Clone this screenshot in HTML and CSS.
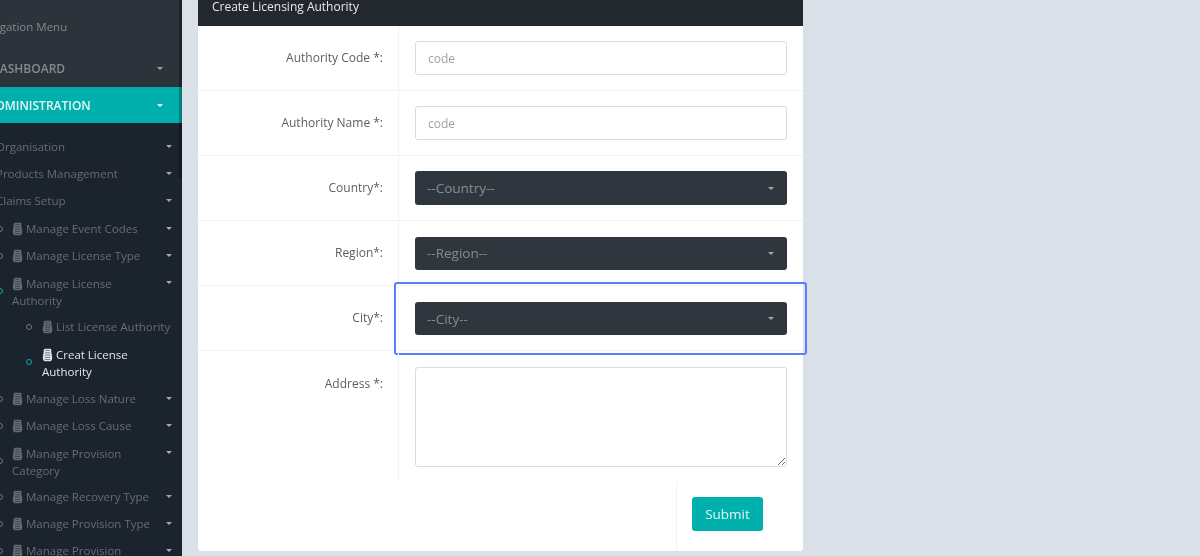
FILE: index.html
```html
<!DOCTYPE html>
<html lang="en">
<head>
    <meta charset="UTF-8">
    <meta name="viewport" content="width=device-width, initial-scale=1.0">
    <title>Create Licensing Authority</title>
    <link rel="stylesheet" href="styles.css">
</head>
<body>
    <svg class="defs" width="0" height="0">
        <symbol id="stack" viewBox="0 0 12 14">
            <path d="M3 0.3h6.5l1 1.6-.6 1.2.6 1.2-.4 1 1 1.4-.6 1.3.8 1.2-.6 3.2-1.2 1.3h-7l-1.2-1.3-.6-3.2.8-1.2-.6-1.3 1-1.4-.4-1 .6-1.2-.6-1.2z" fill="currentColor"/>
            <path d="M3.5 2h5M3.5 4.6h5.5M3 7h6M3 9.6h6M3 12h6" stroke="#1b232c" stroke-width="0.8" opacity="0.75"/>
        </symbol>
    </svg>

    <div class="page">
        <aside class="sidebar">
            <div class="side-top">
                <div class="nav-title">Navigation Menu</div>
                <a class="nav-main">DASHBOARD<span class="caret"></span></a>
            </div>
            <a class="nav-main active">ADMINISTRATION<span class="caret"></span></a>

            <ul class="side-menu">
                <li class="lvl1">Organisation<span class="caret"></span></li>
                <li class="lvl1">Products Management<span class="caret"></span></li>
                <li class="lvl1 group-end">Claims Setup<span class="caret"></span></li>

                <li class="lvl2"><i class="dot"></i><svg class="ico"><use href="#stack"/></svg> Manage Event Codes<span class="caret"></span></li>
                <li class="lvl2"><i class="dot"></i><svg class="ico"><use href="#stack"/></svg> Manage License Type<span class="caret"></span></li>
                <li class="lvl2 two on"><i class="dot"></i><svg class="ico"><use href="#stack"/></svg> Manage License<br>Authority<span class="caret"></span></li>

                <li class="lvl3"><i class="dot"></i><svg class="ico"><use href="#stack"/></svg> List License Authority</li>
                <li class="lvl3 two current"><i class="dot"></i><svg class="ico"><use href="#stack"/></svg> Creat License<br>Authority</li>

                <li class="lvl2"><i class="dot"></i><svg class="ico"><use href="#stack"/></svg> Manage Loss Nature<span class="caret"></span></li>
                <li class="lvl2"><i class="dot"></i><svg class="ico"><use href="#stack"/></svg> Manage Loss Cause<span class="caret"></span></li>
                <li class="lvl2 two"><i class="dot"></i><svg class="ico"><use href="#stack"/></svg> Manage Provision<br>Category<span class="caret"></span></li>
                <li class="lvl2"><i class="dot"></i><svg class="ico"><use href="#stack"/></svg> Manage Recovery Type<span class="caret"></span></li>
                <li class="lvl2"><i class="dot"></i><svg class="ico"><use href="#stack"/></svg> Manage Provision Type<span class="caret"></span></li>
                <li class="lvl2"><i class="dot"></i><svg class="ico"><use href="#stack"/></svg> Manage Provision<span class="caret"></span></li>
            </ul>
            <div class="side-thumb"></div>
        </aside>

        <main class="content">
            <section class="card">
                <h4 class="card-head">Create Licensing Authority</h4>

                <div class="form-row">
                    <label class="form-label">Authority Code *:</label>
                    <div class="form-field"><input class="input" placeholder="code"></div>
                </div>
                <div class="form-row">
                    <label class="form-label">Authority Name *:</label>
                    <div class="form-field"><input class="input" placeholder="code"></div>
                </div>
                <div class="form-row">
                    <label class="form-label">Country*:</label>
                    <div class="form-field"><div class="select">--Country--<span class="caret"></span></div></div>
                </div>
                <div class="form-row">
                    <label class="form-label">Region*:</label>
                    <div class="form-field"><div class="select">--Region--<span class="caret"></span></div></div>
                </div>
                <div class="form-row">
                    <label class="form-label">City*:</label>
                    <div class="form-field field-focus"><div class="select">--City--<span class="caret"></span></div></div>
                </div>
                <div class="form-row last">
                    <label class="form-label">Address *:</label>
                    <div class="form-field"><textarea class="textarea"></textarea></div>
                </div>

                <div class="form-actions">
                    <div class="actions-cell"><button class="btn-submit">Submit</button></div>
                </div>
            </section>
        </main>
    </div>
</body>
</html>
```

FILE: styles.css
```css
* {
    box-sizing: border-box;
}

html, body {
    margin: 0;
    height: 556px;
    overflow: hidden;
}

body {
    background: #d9e0e8;
    font-family: "Open Sans", sans-serif;
    font-size: 12px;
    color: #5b6066;
}

.defs {
    position: absolute;
}

/* the source picture is a soft upscale */
.page {
    display: flex;
    height: 556px;
    overflow: hidden;
    filter: blur(0.4px);
}

/* Sidebar */
.sidebar {
    position: relative;
    width: 182px;
    flex: none;
    height: 556px;
    overflow: hidden;
    background: #1b232c;
    color: #6f767d;
}

.side-thumb {
    position: absolute;
    top: 0;
    right: 0;
    width: 3px;
    height: 178px;
    background: rgba(0, 0, 0, 0.28);
}

.side-top {
    background: #2c333b;
    height: 87px;
}

.nav-title {
    height: 50px;
    padding-top: 18px;
    margin-left: -24px;
    line-height: 18px;
    font-size: 11.5px;
    color: #82888e;
    white-space: nowrap;
}

.nav-main {
    display: flex;
    align-items: center;
    justify-content: space-between;
    height: 37px;
    margin-left: -9px;
    padding-right: 19px;
    font-size: 12px;
    font-weight: 600;
    color: #858b91;
    white-space: nowrap;
}

.nav-main.active {
    height: 36px;
    margin-left: -12px;
    background: #00b0ad;
    color: #e4f6f5;
}

.nav-main.active .caret {
    border-top-color: #fff;
}

.caret {
    display: block;
    width: 0;
    height: 0;
    border-left: 3.5px solid transparent;
    border-right: 3.5px solid transparent;
    border-top: 3.5px solid #a4a8ac;
}

.side-menu {
    list-style: none;
    margin: 0;
    padding: 10px 5px 0 0;
}

.side-menu li {
    position: relative;
    display: flex;
    flex-wrap: wrap;
    height: 27px;
    line-height: 27px;
    font-size: 11.5px;
    white-space: nowrap;
    color: #666d74;
}

.side-menu li .caret {
    position: absolute;
    right: 5px;
    top: 12px;
}

.side-menu .lvl1 {
    margin-left: -4px;
}

.side-menu .group-end {
    margin-bottom: 1px;
}

.side-menu .lvl2,
.side-menu .lvl3 {
    display: block;
}

.side-menu .lvl2 {
    padding-left: 12px;
}

.side-menu .lvl3 {
    padding-left: 42px;
}

.side-menu .two {
    height: 44px;
    line-height: 17px;
    padding-top: 6px;
}

.side-menu .lvl3.current {
    height: 45px;
    color: #e3e6e8;
}

.ico {
    width: 11px;
    height: 14px;
    vertical-align: -3px;
}

.dot {
    position: absolute;
    top: 11px;
    left: -3px;
    width: 6px;
    height: 6px;
    border: 1px solid #6f767d;
    border-radius: 50%;
}

.lvl3 .dot {
    left: 26px;
}

.two .dot {
    top: 19px;
}

.on .dot,
.current .dot {
    border-color: #00b0ad;
}

/* Form card */
.content {
    flex: 1;
    padding-left: 16px;
}

.card {
    width: 605px;
    height: 551px;
    background: #fff;
    border-radius: 0 0 3px 3px;
}

.card-head {
    height: 25.5px;
    margin: 0;
    padding: 0 14px;
    background: #23272e;
    color: #e6e9eb;
    font-size: 12px;
    font-weight: 400;
    line-height: 13px;
}

.form-row {
    display: flex;
    height: 65.2px;
    border-bottom: 1px solid #f0f2f4;
}

.form-row.last {
    height: 131px;
    border-bottom: none;
}

.form-label {
    width: 200px;
    flex: none;
    padding: 23px 15px 0 0;
    text-align: right;
    line-height: 18px;
    color: #5b6066;
}

.form-row.last .form-label {
    padding-top: 24px;
}

.form-field {
    position: relative;
    flex: 1;
    padding: 15.5px 16px 0 16px;
    border-left: 1px solid #f0f2f4;
}

.input,
.textarea {
    display: block;
    width: 100%;
    border: 1px solid #d9dce1;
    border-radius: 3px;
    background: #fff;
    font-family: inherit;
    font-size: 12px;
    color: #5b6066;
}

.input {
    height: 34px;
    padding: 0 12px;
}

.input::placeholder {
    color: #9da1a6;
}

.textarea {
    height: 100px;
}

.select {
    display: flex;
    align-items: center;
    justify-content: space-between;
    height: 33.5px;
    padding: 0 13px 0 12px;
    background: #2f363e;
    border-radius: 3px;
    color: #878c92;
    font-size: 13.5px;
}

/* blue outline laid over the selected field */
.field-focus::after {
    content: "";
    box-sizing: border-box;
    position: absolute;
    top: -4.5px;
    left: -5px;
    width: 413px;
    height: 73px;
    border: 2px solid #5b7cff;
    border-radius: 3px;
}

.form-actions {
    display: flex;
    justify-content: flex-end;
    height: 69px;
}

.actions-cell {
    width: 127px;
    padding: 14.5px 0 0 15px;
    border-left: 1px solid #f0f2f4;
}

.btn-submit {
    width: 71px;
    height: 34px;
    border: none;
    border-radius: 3px;
    background: #00b0ad;
    color: #dff5f4;
    font-family: inherit;
    font-size: 13.5px;
}
```
